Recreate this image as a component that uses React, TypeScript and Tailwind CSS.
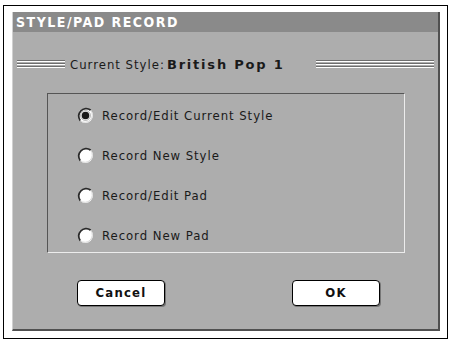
const font = "font-['DejaVu_Sans_Condensed','Liberation_Sans_Narrow','DejaVu_Sans',sans-serif]";

const Lines = ({ className }: { className: string }) => (
    <div className={`flex flex-col gap-[1px] ${className}`}>
        {[0, 1, 2].map((i) => (
            <div key={i} className="flex flex-col">
                <div className="h-[1px] bg-[#6e6e6e]" />
                <div className="h-[1px] bg-white" />
            </div>
        ))}
    </div>
);

const Radio = ({ checked }: { checked?: boolean }) => (
    <svg width="17" height="17" viewBox="0 0 17 17" className="flex-shrink-0">
        <circle cx="8.5" cy="8.5" r="7.4" fill="#fff" />
        <path d="M3.3 13.7A7.4 7.4 0 0 1 13.7 3.3" fill="none" stroke="#2a2a2a" strokeWidth="1.8" />
        <path d="M13.7 3.3A7.4 7.4 0 0 1 3.3 13.7" fill="none" stroke="#d8d8d8" strokeWidth="1" />
        {checked && (
            <>
                <circle cx="8.5" cy="8.5" r="3.8" fill="#1a1a1a" />
                <circle cx="8.5" cy="8.5" r="4.9" fill="none" stroke="#777" strokeWidth="0.6" />
            </>
        )}
    </svg>
);

const options = [
    { label: "Record/Edit Current Style", checked: true },
    { label: "Record New Style" },
    { label: "Record/Edit Pad" },
    { label: "Record New Pad" },
];

export default function App() {
    return (
        <div className={`w-[451px] h-[340px] bg-white pt-[5px] pl-[3px] ${font}`}>
            <div className="w-[445px] h-[334px] border border-black pt-[6px] pl-[8px]">
                {/* PANEL */}
                <div className="w-[428px] h-[319px] bg-[#adadad] border-r-2 border-b-2 border-[#505050] border-l border-l-[#d0d0d0] flex flex-col">
                    <div className="h-[20px] bg-[#8a8a8a] flex items-center pl-[3px]">
                        <span className="text-white font-bold text-[14px] tracking-[1.5px] leading-none">
                            STYLE/PAD RECORD
                        </span>
                    </div>

                    {/* CURRENT STYLE */}
                    <div className="flex items-center mt-[25px] h-[14px] pl-[4px] pr-[4px]">
                        <Lines className="w-[48px]" />
                        <span className="ml-[5px] text-[13px] text-[#1a1a1a] leading-none tracking-[1px]">
                            Current Style:
                        </span>
                        <span className="ml-[2px] text-[13px] font-bold text-[#1a1a1a] leading-none tracking-[1.8px] font-['DejaVu_Sans',sans-serif]">
                            British Pop 1
                        </span>
                        <div className="flex-1" />
                        <Lines className="w-[118px]" />
                    </div>

                    {/* OPTIONS BOX */}
                    <div className="ml-[34px] mt-[22px] w-[358px] h-[160px] border-t border-l border-[#555] border-r border-b border-r-[#ececec] border-b-[#ececec] pt-[11px] pl-[29px] flex flex-col gap-[20px]">
                        {options.map((o) => (
                            <div key={o.label} className="flex items-center h-[20px] gap-[8px]">
                                <Radio checked={o.checked} />
                                <span className="text-[13px] text-[#1a1a1a] leading-none tracking-[0.95px]">
                                    {o.label}
                                </span>
                            </div>
                        ))}
                    </div>

                    {/* BUTTONS */}
                    <div className="flex mt-[27px] ml-[64px] gap-[127px]">
                        {["Cancel", "OK"].map((b) => (
                            <div
                                key={b}
                                className="w-[88px] h-[26px] bg-white border border-black rounded-[4px] shadow-[1px_1px_0_#777] flex items-center justify-center text-[13px] font-bold text-[#111] tracking-[1.2px]"
                            >
                                {b}
                            </div>
                        ))}
                    </div>
                </div>
            </div>
        </div>
    );
}
